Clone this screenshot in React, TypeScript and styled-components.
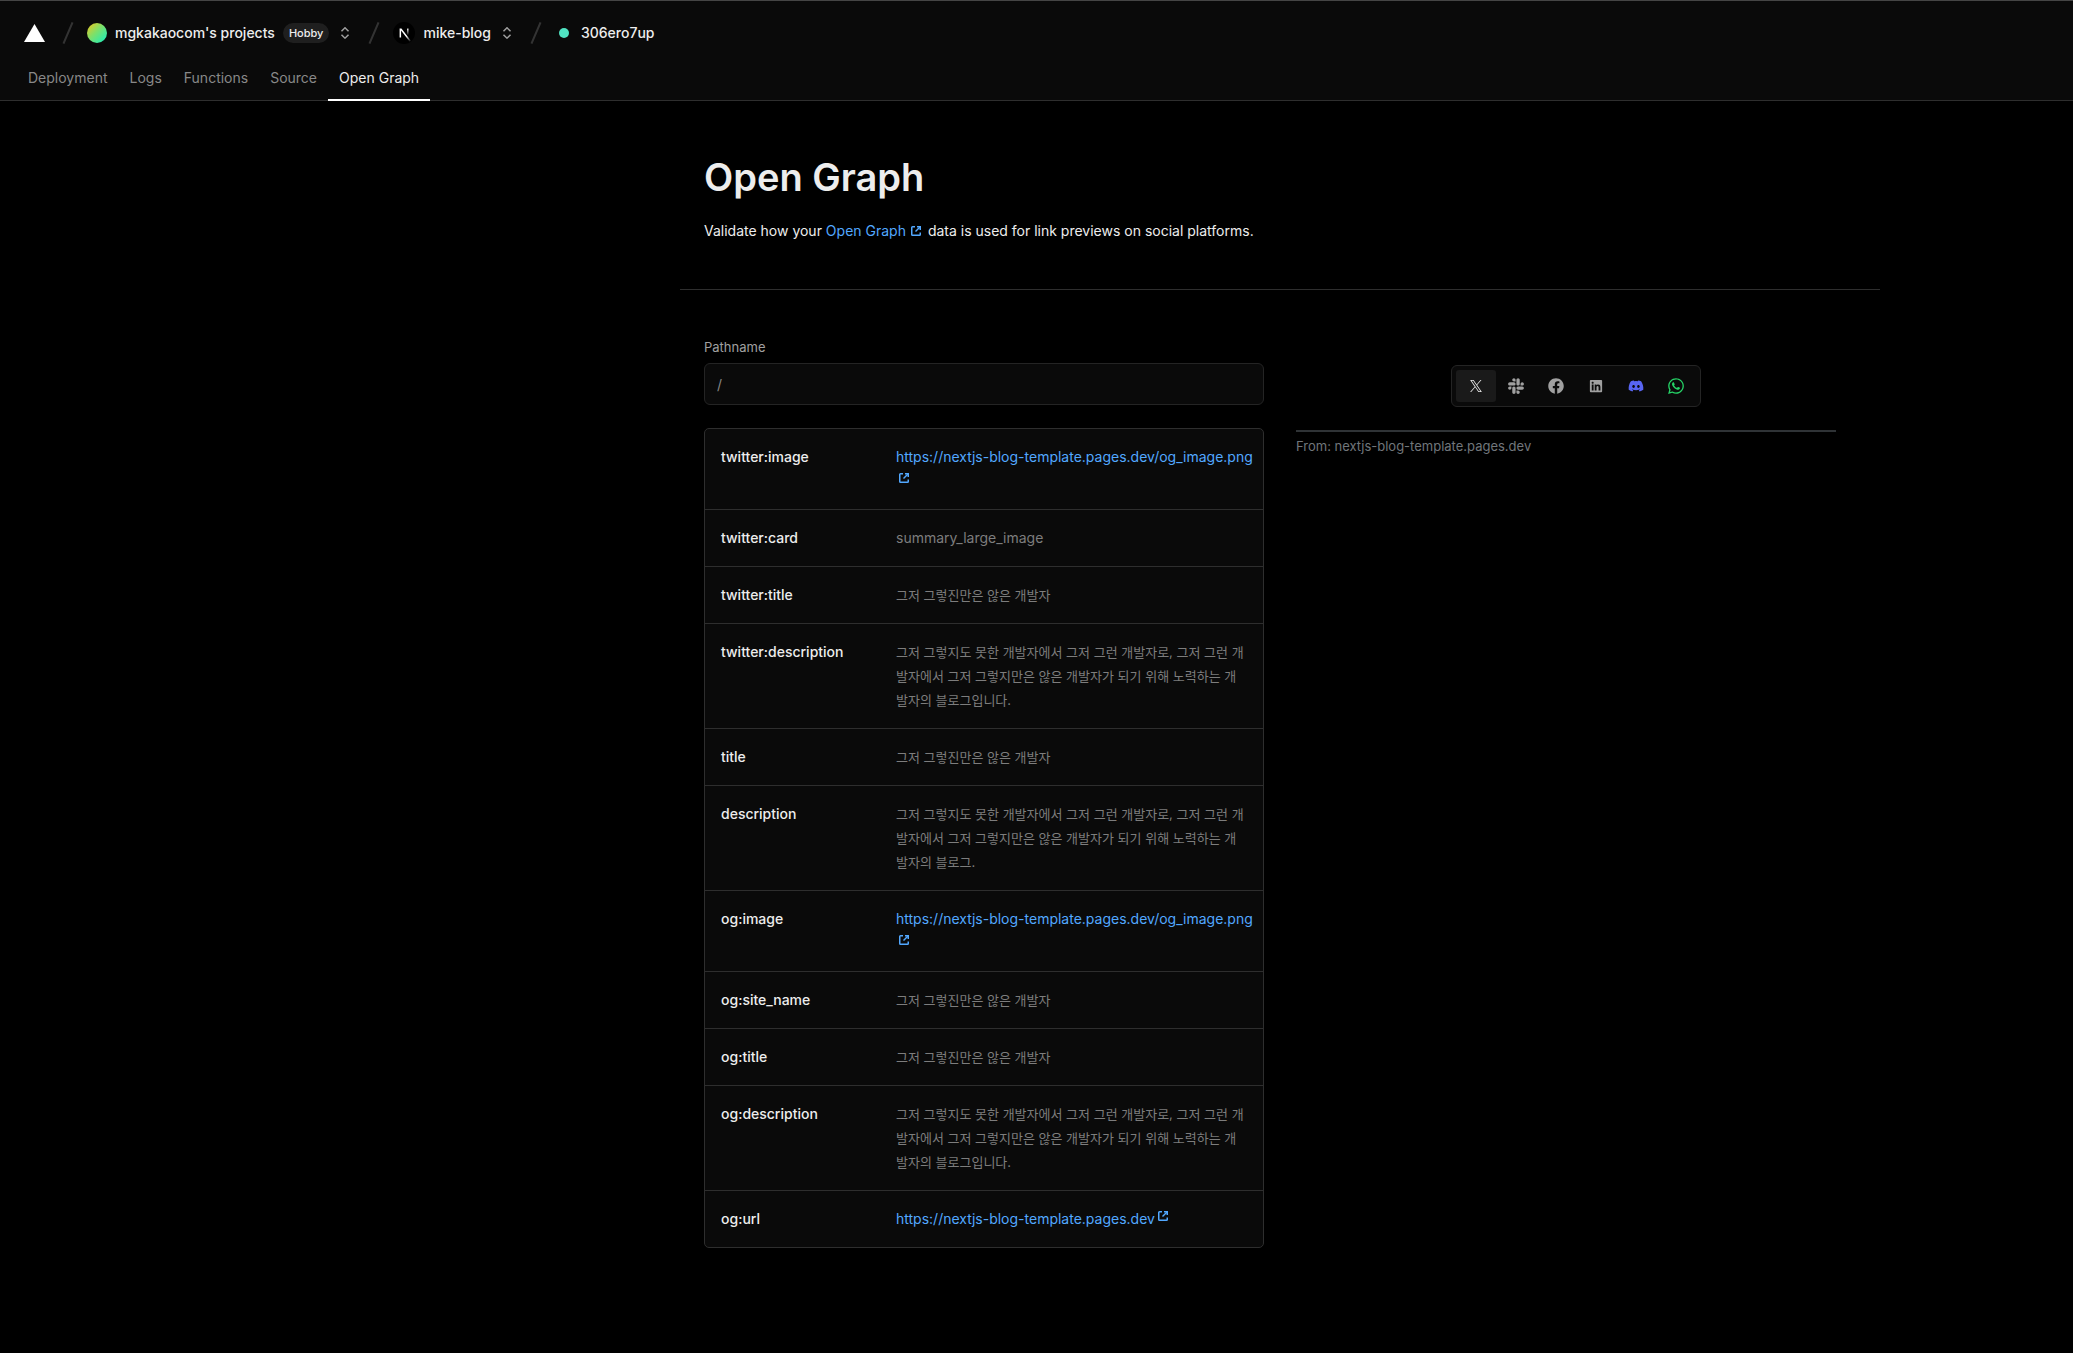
import React from 'react';
import styled, { createGlobalStyle } from 'styled-components';
import { FaSlack, FaFacebook, FaLinkedin, FaDiscord, FaWhatsapp } from 'react-icons/fa';

const GlobalStyle = createGlobalStyle`
  * { box-sizing: border-box; }
  body {
    margin: 0;
    background: #000;
    color: #ededed;
    font: 14px/20px Inter, "Noto Sans CJK KR", sans-serif;
    -webkit-font-smoothing: antialiased;
  }
  a { color: inherit; text-decoration: none; }
  button, input { font: inherit; color: inherit; }
  svg { display: block; flex: none; }
`;

const Header = styled.header`
  background: #0a0a0a;
  border-top: 1px solid #454545;
  border-bottom: 1px solid #2e2e2e;
`;

const Breadcrumb = styled.nav`
  display: flex;
  align-items: center;
  height: 64px;
  padding: 0 24px;
  font-weight: 500;
`;

const HomeLink = styled.a`
  padding-right: 6px;
`;

const Crumb = styled.a`
  display: flex;
  align-items: center;
  gap: 8px;
`;

const SlashIcon = styled.svg`
  margin: 0 8px 0 6px;
`;

const Avatar = styled.span`
  width: 20px;
  height: 20px;
  border-radius: 50%;
  background: linear-gradient(135deg, #f5c518 0%, #7de06a 45%, #0fefc5 100%);
`;

const Badge = styled.span`
  padding: 0 6px;
  border-radius: 10px;
  background: #1f1f1f;
  font-size: 11px;
`;

const IconButton = styled.button`
  display: flex;
  align-items: center;
  justify-content: center;
  width: 24px;
  height: 32px;
  margin-left: 4px;
  padding: 0;
  border: 0;
  background: none;
  color: #a0a0a0;
`;

const StatusDot = styled.span`
  width: 10px;
  height: 10px;
  margin: 0 4px;
  border-radius: 50%;
  background: #50e3c2;
`;

const Tabs = styled.nav`
  display: flex;
  height: 35px;
  padding: 0 17px;
`;

const Tab = styled.a<{ $active?: boolean }>`
  padding: 3px 11px 0;
  color: ${p => (p.$active ? '#ededed' : '#888')};
  box-shadow: ${p => (p.$active ? '0 1px 0 #fff, inset 0 -1px 0 #fff' : 'none')};
`;

const Main = styled.main`
  padding-left: 487px;
`;

const Container = styled.div`
  max-width: 1200px;
  margin: 0 auto;
`;

const Intro = styled.section`
  padding: 52px 24px 48px;
  border-bottom: 1px solid #2e2e2e;
`;

const Title = styled.h1`
  margin: 0 0 20px;
  font-size: 38px;
  line-height: 48px;
  font-weight: 600;
`;

const Text = styled.p`
  margin: 0;
`;

const InlineLink = styled.a`
  display: inline-flex;
  align-items: center;
  gap: 4px;
  margin-right: 2px;
  color: #52a8ff;
`;

const Columns = styled.div`
  display: grid;
  grid-template-columns: 1fr 1fr;
  gap: 32px;
  padding: 47px 24px;
`;

const Label = styled.label`
  display: block;
  margin-bottom: 6px;
  font-size: 13px;
  color: #a0a0a0;
`;

const PathInput = styled.input`
  display: block;
  width: 100%;
  height: 42px;
  padding: 0 12px;
  border: 1px solid #242424;
  border-radius: 6px;
  background: #0a0a0a;
  outline: none;
  &::placeholder { color: #878787; opacity: 1; }
`;

const TableFrame = styled.div`
  margin-top: 23px;
  border: 1px solid #2e2e2e;
  border-radius: 5px;
  background: #0a0a0a;
`;

const Table = styled.table`
  width: 100%;
  border-collapse: collapse;
  table-layout: fixed;
  line-height: 24px;
`;

const Row = styled.tr`
  border-bottom: 1px solid #2e2e2e;
  &:last-child { border-bottom: 0; }
`;

const KeyCell = styled.th`
  width: 191px;
  padding: 16px 0 16px 16px;
  font-weight: 500;
  text-align: left;
  vertical-align: top;
`;

const ValueCell = styled.td<{ $korean?: boolean }>`
  padding: 16px 15px 16px 0;
  font-size: ${p => (p.$korean ? 13 : 14)}px;
  color: #7d7d7d;
  vertical-align: top;
`;

const ValueLink = styled.a`
  color: #52a8ff;
  svg { display: inline-block; margin-left: 2px; vertical-align: 2px; }
`;

const Url = styled.span`
  white-space: nowrap;
`;

const Preview = styled.section`
  padding-top: 28px;
`;

const Switcher = styled.div`
  display: flex;
  width: fit-content;
  margin: 0 auto 23px;
  padding: 4px;
  border: 1px solid #242424;
  border-radius: 6px;
  background: #0a0a0a;
`;

const Platform = styled.button<{ $active?: boolean; $color?: string }>`
  display: flex;
  align-items: center;
  justify-content: center;
  width: 40px;
  height: 32px;
  padding: 0;
  border: 0;
  border-radius: 3px;
  background: ${p => (p.$active ? '#1a1a1a' : 'transparent')};
  color: ${p => p.$color ?? '#a0a0a0'};
`;

const Card = styled.div`
  max-width: 540px;
  padding-top: 4px;
  border-top: 2px solid #2f3336;
  font-size: 13px;
  color: #71767b;
`;

const Slash = () => (
  <SlashIcon width="22" height="22" viewBox="0 0 16 16" fill="#333" aria-hidden="true">
    <path fillRule="evenodd" clipRule="evenodd" d="M4.01526 15.3939L4.3107 14.7046L10.3107 0.704556L10.6061 0.0151978L11.9849 0.606077L11.6894 1.29544L5.68942 15.2954L5.39398 15.9848L4.01526 15.3939Z" />
  </SlashIcon>
);

const ChevronUpDown = () => (
  <svg width="16" height="16" viewBox="0 0 16 16" fill="currentColor" aria-hidden="true">
    <path fillRule="evenodd" clipRule="evenodd" d="M8.7071 2.39644C8.31658 2.00592 7.68341 2.00592 7.29289 2.39644L4.46966 5.21966L3.93933 5.74999L4.99999 6.81065L5.53032 6.28032L7.99999 3.81065L10.4697 6.28032L11 6.81065L12.0607 5.74999L11.5303 5.21966L8.7071 2.39644ZM5.53032 9.71966L4.99999 9.18933L3.93933 10.25L4.46966 10.7803L7.29289 13.6035C7.68341 13.9941 8.31658 13.9941 8.7071 13.6035L11.5303 10.7803L12.0607 10.25L11 9.18933L10.4697 9.71966L7.99999 12.1893L5.53032 9.71966Z" />
  </svg>
);

const ExternalIcon = () => (
  <svg width="12" height="12" viewBox="0 0 12 12" fill="none" stroke="currentColor" strokeWidth="1.5" aria-hidden="true">
    <path d="M5 1.75H2.5A.75.75 0 0 0 1.75 2.5V9.5A.75.75 0 0 0 2.5 10.25H9.5A.75.75 0 0 0 10.25 9.5V7.5" />
    <path d="M7 1.75H10.25V5" />
    <path d="M10.25 1.75L5.5 6.5" />
  </svg>
);

const XLogo = () => (
  <svg width="12" height="12" viewBox="0 0 24 24" fill="currentColor" aria-hidden="true">
    <path d="M14.234 10.162 22.977 0h-2.072l-7.591 8.824L7.251 0H.258l9.168 13.343L.258 24H2.33l8.016-9.318L16.749 24h6.993zm-2.837 3.299-.929-1.329L3.076 1.56h3.182l5.965 8.532.929 1.329 7.754 11.09h-3.182z" />
  </svg>
);

const NextLogo = () => (
  <svg width="22" height="22" viewBox="0 0 180 180" aria-hidden="true">
    <defs>
      <linearGradient id="nextDiagonal" x1="109" y1="116" x2="144" y2="160" gradientUnits="userSpaceOnUse">
        <stop stopColor="#fff" /><stop offset="1" stopColor="#fff" stopOpacity="0" />
      </linearGradient>
      <linearGradient id="nextStem" x1="121" y1="54" x2="121" y2="107" gradientUnits="userSpaceOnUse">
        <stop stopColor="#fff" /><stop offset="1" stopColor="#fff" stopOpacity="0" />
      </linearGradient>
    </defs>
    <circle cx="90" cy="90" r="90" fill="#000" />
    <path d="M149.508 157.52L69.142 54H54V125.97H66.1136V69.3836L139.999 164.845C143.333 162.614 146.509 160.165 149.508 157.52Z" fill="url(#nextDiagonal)" />
    <rect x="115" y="54" width="12" height="72" fill="url(#nextStem)" />
  </svg>
);

const TITLE = '그저 그렇진만은 않은 개발자';
const ABOUT = '그저 그렇지도 못한 개발자에서 그저 그런 개발자로, 그저 그런 개발자에서 그저 그렇지만은 않은 개발자가 되기 위해 노력하는 개발자의 블로그';
const SITE = 'https://nextjs-blog-template.pages.dev';
const IMAGE = SITE + '/og_image.png';

const tags: { name: string; value: string; kind?: 'link' | 'korean' }[] = [
  { name: 'twitter:image', value: IMAGE, kind: 'link' },
  { name: 'twitter:card', value: 'summary_large_image' },
  { name: 'twitter:title', value: TITLE, kind: 'korean' },
  { name: 'twitter:description', value: ABOUT + '입니다.', kind: 'korean' },
  { name: 'title', value: TITLE, kind: 'korean' },
  { name: 'description', value: ABOUT + '.', kind: 'korean' },
  { name: 'og:image', value: IMAGE, kind: 'link' },
  { name: 'og:site_name', value: TITLE, kind: 'korean' },
  { name: 'og:title', value: TITLE, kind: 'korean' },
  { name: 'og:description', value: ABOUT + '입니다.', kind: 'korean' },
  { name: 'og:url', value: SITE, kind: 'link' },
];

const platforms = [
  { name: 'X', icon: <XLogo />, color: '#ededed' },
  { name: 'Slack', icon: <FaSlack size={18} /> },
  { name: 'Facebook', icon: <FaFacebook size={16} /> },
  { name: 'LinkedIn', icon: <FaLinkedin size={14} /> },
  { name: 'Discord', icon: <FaDiscord size={16} />, color: '#5865f2' },
  { name: 'WhatsApp', icon: <FaWhatsapp size={18} />, color: '#25d366' },
];

export default function App() {
  return (
    <>
      <GlobalStyle />
      <Header>
        <Breadcrumb aria-label="Breadcrumb">
          <HomeLink href="#" aria-label="Dashboard">
            <svg width="21" height="18" viewBox="0 0 21 18" fill="#fff"><path d="M10.5 0L21 18H0Z" /></svg>
          </HomeLink>
          <Slash />
          <Crumb href="#"><Avatar />mgkakaocom's projects<Badge>Hobby</Badge></Crumb>
          <IconButton aria-label="Switch team"><ChevronUpDown /></IconButton>
          <Slash />
          <Crumb href="#"><NextLogo />mike-blog</Crumb>
          <IconButton aria-label="Switch project"><ChevronUpDown /></IconButton>
          <Slash />
          <Crumb href="#"><StatusDot />306ero7up</Crumb>
        </Breadcrumb>
        <Tabs aria-label="Deployment sections">
          {['Deployment', 'Logs', 'Functions', 'Source', 'Open Graph'].map(t => (
            <Tab href="#" key={t} $active={t === 'Open Graph'}>{t}</Tab>
          ))}
        </Tabs>
      </Header>
      <Main>
        <Container>
          <Intro>
            <Title>Open Graph</Title>
            <Text>
              Validate how your <InlineLink href="#">Open Graph<ExternalIcon /></InlineLink> data is used for link previews on social platforms.
            </Text>
          </Intro>
          <Columns>
            <section>
              <Label htmlFor="pathname">Pathname</Label>
              <PathInput id="pathname" placeholder="/" />
              <TableFrame>
                <Table>
                  <tbody>
                    {tags.map(tag => (
                      <Row key={tag.name}>
                        <KeyCell scope="row">{tag.name}</KeyCell>
                        <ValueCell $korean={tag.kind === 'korean'}>
                          {tag.kind === 'link'
                            ? <ValueLink href="#"><Url>{tag.value}</Url><ExternalIcon /></ValueLink>
                            : tag.value}
                        </ValueCell>
                      </Row>
                    ))}
                  </tbody>
                </Table>
              </TableFrame>
            </section>
            <Preview>
              <Switcher role="group" aria-label="Platform">
                {platforms.map((p, i) => (
                  <Platform key={p.name} aria-label={p.name} $active={i === 0} $color={p.color}>{p.icon}</Platform>
                ))}
              </Switcher>
              <Card>From: nextjs-blog-template.pages.dev</Card>
            </Preview>
          </Columns>
        </Container>
      </Main>
    </>
  );
}
